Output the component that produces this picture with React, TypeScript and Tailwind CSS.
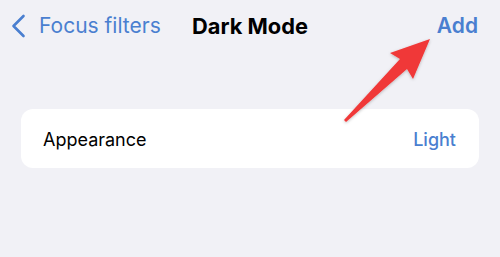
import React from "react";

export default function App() {
  return (
    <div
      className="relative w-[500px] h-[257px] bg-[#f1f1f6] overflow-hidden"
      style={{ fontFamily: "Inter, 'Noto Sans', sans-serif" }}
    >
      <div className="grid grid-cols-[1fr_auto_1fr] items-center h-[52px] px-[11px]">
        <div className="flex items-center gap-[13px] text-[#4a7fd0]">
          <svg width="15" height="24" viewBox="0 0 15 24" fill="none">
            <path d="M12.5 2 L2.5 12 L12.5 22" stroke="#4a7fd0" strokeWidth="2.6" strokeLinecap="round" strokeLinejoin="round" />
          </svg>
          <span className="text-[21px]">Focus filters</span>
        </div>
        <div className="text-[21.8px] font-bold text-black">Dark Mode</div>
        <div className="justify-self-end mr-[11px] text-[21px] font-semibold text-[#4a7fd0]">Add</div>
      </div>
      <div className="mt-[57px] mx-[21px] h-[59px] bg-white rounded-[12px] flex items-center justify-between pl-[22px] pr-[23px] pt-[2px]">
        <span className="text-[18px] text-black">Appearance</span>
        <span className="text-[18px] font-medium text-[#4a7fd0]">Light</span>
      </div>
      <svg className="absolute left-0 top-0" width="500" height="257" viewBox="0 0 500 257">
        <defs>
          <filter id="sh" x="-20%" y="-20%" width="140%" height="140%">
            <feDropShadow dx="0" dy="1" stdDeviation="1.5" floodColor="#000" floodOpacity="0.25" />
          </filter>
        </defs>
        <path
          d="M430 39 L413 79 L407 69 L346 122 L344 120 L400 59 L390 53 Z"
          fill="#f03838"
          filter="url(#sh)"
        />
      </svg>
    </div>
  );
}
